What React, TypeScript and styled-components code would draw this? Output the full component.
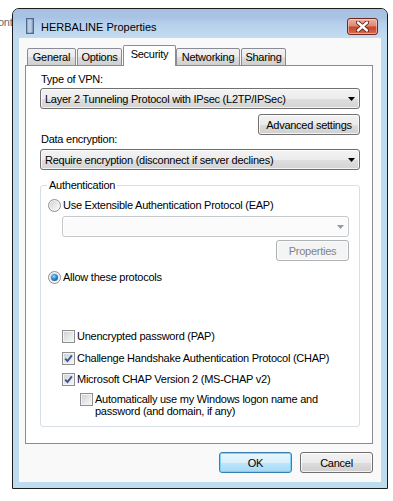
import styled, { createGlobalStyle } from 'styled-components';

const GlobalStyle = createGlobalStyle`
  html, body {
    margin: 0;
    padding: 0;
    background: #fff;
  }
  body {
    font-family: "Liberation Sans", Arial, sans-serif;
    font-size: 11px;
    letter-spacing: -0.25px;
    color: #000;
  }
`;

const Page = styled.div`
  display: flex;
  align-items: flex-start;
  width: 393px;
  height: 501px;
  overflow: hidden;
  background: #fff;
`;

// text of the window lying behind the dialog
const Behind = styled.div`
  width: 12px;
  flex: 0 0 12px;
  overflow: hidden;
  padding-top: 15px;
  line-height: 14px;
  color: #6a6a6a;
  white-space: nowrap;
  span {
    margin-left: -2px;
  }
`;

const Window = styled.div`
  box-sizing: border-box;
  width: 376px;
  height: 481px;
  margin-top: 8px;
  border: 1px solid #1c1c1c;
  border-radius: 7px 7px 0 0;
  background: #bddcee;
  display: flex;
  flex-direction: column;
  overflow: hidden;
`;

const TitleBar = styled.div`
  height: 29px;
  flex: 0 0 29px;
  display: flex;
  align-items: flex-start;
  padding-left: 13px;
  padding-right: 9px;
  background: linear-gradient(180deg, #a6bfe2 0%, #a9c3e5 30%, #b6cfeb 50%, #bed7ef 75%, #c3dcf0 100%);
`;

const TitleIcon = styled.svg`
  margin-top: 9px;
  flex: 0 0 auto;
`;

const TitleText = styled.div`
  margin-left: 7px;
  margin-top: 11px;
  line-height: 14px;
  letter-spacing: 0;
  flex: 1;
`;

const CloseButton = styled.div`
  box-sizing: border-box;
  width: 31px;
  height: 17px;
  margin-top: 9px;
  border: 1px solid #6e2a22;
  border-radius: 3px;
  background: linear-gradient(180deg, #eab2a4 0%, #dc8a74 45%, #c9452c 55%, #d66a4f 100%);
  box-shadow: inset 0 0 0 1px rgba(255, 220, 210, 0.55);
  display: flex;
  align-items: center;
  justify-content: center;
`;

const Client = styled.div`
  flex: 1;
  margin: 0 6px 6px 6px;
  background: #f9f9f9;
  display: flex;
  flex-direction: column;
  padding-top: 7px;
`;

const TabStrip = styled.div`
  display: flex;
  align-items: flex-end;
  gap: 1px;
  height: 21px;
  padding-left: 8px;
  margin-bottom: -1px;
  position: relative;
  z-index: 1;
`;

const Tab = styled.div<{ $width: number; $active?: boolean }>`
  box-sizing: border-box;
  width: ${p => p.$width}px;
  height: ${p => (p.$active ? 21 : 18)}px;
  margin-right: ${p => (p.$active ? -1 : 0)}px;
  border: 1px solid #898c95;
  border-bottom: ${p => (p.$active ? 'none' : '1px solid #898c95')};
  border-radius: 2px 2px 0 0;
  background: ${p =>
    p.$active ? '#fff' : 'linear-gradient(180deg, #f2f2f2 0%, #ebebeb 50%, #dddddd 51%, #cfcfcf 100%)'};
  text-align: center;
  line-height: ${p => (p.$active ? 16 : 17)}px;
`;

const Panel = styled.div`
  box-sizing: border-box;
  width: 348px;
  height: 379px;
  margin-left: 6px;
  border: 1px solid #898c95;
  background: #fff;
  padding: 6px 12px 0 14px;
  display: flex;
  flex-direction: column;
`;

const FieldLabel = styled.div<{ $top?: number }>`
  line-height: 14px;
  padding-left: 1px;
  margin-top: ${p => p.$top ?? 0}px;
`;

const SelectBox = styled.div<{ $width: number; $top: number; $disabled?: boolean }>`
  box-sizing: border-box;
  width: ${p => p.$width}px;
  height: 21px;
  margin-top: ${p => p.$top}px;
  display: flex;
  align-items: center;
  justify-content: space-between;
  padding: 0 4px 0 4px;
  border: 1px solid ${p => (p.$disabled ? '#c3c8cc' : '#707070')};
  border-radius: 3px;
  background: ${p =>
    p.$disabled ? '#fbfbfb' : 'linear-gradient(180deg, #f3f3f3 0%, #ececec 50%, #dfdfdf 51%, #d3d3d3 100%)'};
  box-shadow: inset 0 0 0 1px ${p => (p.$disabled ? '#ffffff' : 'rgba(255,255,255,0.75)')};
  white-space: nowrap;
`;

const ButtonRow = styled.div<{ $top: number; $right?: number }>`
  display: flex;
  justify-content: flex-end;
  gap: 8px;
  margin-top: ${p => p.$top}px;
  padding-right: ${p => p.$right ?? 0}px;
`;

const Button = styled.div<{ $width: number; $isDefault?: boolean; $disabled?: boolean }>`
  box-sizing: border-box;
  width: ${p => p.$width}px;
  height: 21px;
  border: 1px solid ${p => (p.$isDefault ? '#3c7fb1' : p.$disabled ? '#adb2b5' : '#707070')};
  border-radius: 3px;
  background: ${p =>
    p.$disabled
      ? '#f4f4f4'
      : p.$isDefault
      ? 'linear-gradient(180deg, #eaf6fd 0%, #d9f0fc 50%, #bee6fd 51%, #a7d9f5 100%)'
      : 'linear-gradient(180deg, #f2f2f2 0%, #ebebeb 50%, #dddddd 51%, #cfcfcf 100%)'};
  box-shadow: inset 0 0 0 1px ${p => (p.$isDefault ? '#7ed2f7' : 'rgba(255,255,255,0.75)')};
  color: ${p => (p.$disabled ? '#838383' : '#000')};
  display: flex;
  align-items: center;
  justify-content: center;
`;

const GroupBox = styled.fieldset`
  box-sizing: border-box;
  width: 320px;
  margin: 8px 0 0 0;
  padding: 0 10px 9px 7px;
  border: 1px solid #d5dfe5;
  border-radius: 3px;
  display: flex;
  flex-direction: column;
`;

const Legend = styled.legend`
  margin-left: -1px;
  padding: 0 2px;
  line-height: 14px;
`;

const OptionRow = styled.div<{ $top: number; $indent?: number; $align?: string }>`
  display: flex;
  align-items: ${p => p.$align ?? 'center'};
  gap: 2px;
  margin-top: ${p => p.$top}px;
  padding-left: ${p => p.$indent ?? 0}px;
  line-height: 14px;
`;

const Radio = styled.span<{ $checked?: boolean }>`
  box-sizing: border-box;
  width: 13px;
  height: 13px;
  flex: 0 0 13px;
  border-radius: 50%;
  border: 1px solid #8e8f8f;
  background: linear-gradient(135deg, #c9ccd1 0%, #e6e7e9 50%, #fbfbfb 100%);
  box-shadow: inset 0 0 0 1px #f5f5f5;
  display: flex;
  align-items: center;
  justify-content: center;
  &::after {
    content: '';
    display: ${p => (p.$checked ? 'block' : 'none')};
    width: 7px;
    height: 7px;
    border-radius: 50%;
    background: radial-gradient(circle at 40% 35%, #9be0fb 0%, #2f8fd3 40%, #0c3f79 100%);
  }
`;

const CheckBox = styled.span`
  box-sizing: border-box;
  width: 13px;
  height: 13px;
  flex: 0 0 13px;
  border: 1px solid #8e8f8f;
  background: linear-gradient(135deg, #cbced3 0%, #e4e5e7 50%, #f8f8f8 100%);
  box-shadow: inset 0 0 0 1px #f4f4f4;
  display: flex;
  align-items: center;
  justify-content: center;
`;

const OptionText = styled.span<{ $lineHeight?: number }>`
  line-height: ${p => p.$lineHeight ?? 14}px;
`;

const Arrow = ({ color }: { color: string }) => (
  <svg width="7" height="4" viewBox="0 0 7 4">
    <polygon points="0,0 7,0 3.5,4" fill={color} />
  </svg>
);

const Check = () => (
  <svg width="9" height="9" viewBox="0 0 9 9">
    <path d="M1.2 4.6 L3.5 7 L7.9 1.3" fill="none" stroke="#3b5595" strokeWidth="1.9" />
  </svg>
);

const Checkbox = ({ checked }: { checked?: boolean }) => <CheckBox>{checked && <Check />}</CheckBox>;

const ServerIcon = () => (
  <TitleIcon width="8" height="16" viewBox="0 0 8 16">
    <defs>
      <linearGradient id="srv" x1="0" x2="1">
        <stop offset="0" stopColor="#7d97bb" />
        <stop offset="0.5" stopColor="#a9bfdc" />
        <stop offset="1" stopColor="#58779f" />
      </linearGradient>
    </defs>
    <rect x="0.5" y="0.5" width="7" height="15" fill="url(#srv)" stroke="#4f6a91" />
    {[3, 5, 7, 9, 11, 13].map(y => (
      <line key={y} x1="1.5" x2="6.5" y1={y} y2={y} stroke="#e3ecf7" strokeWidth="0.8" />
    ))}
  </TitleIcon>
);

const CloseGlyph = () => (
  <svg width="13" height="11" viewBox="0 0 13 11">
    <path d="M2 1.5 L11 9.5 M11 1.5 L2 9.5" stroke="#5a1e16" strokeWidth="4.2" strokeLinecap="round" />
    <path d="M2 1.5 L11 9.5 M11 1.5 L2 9.5" stroke="#fff" strokeWidth="2.4" strokeLinecap="round" />
  </svg>
);

const tabs = [
  { label: 'General', width: 49 },
  { label: 'Options', width: 45 },
  { label: 'Security', width: 53, active: true },
  { label: 'Networking', width: 64 },
  { label: 'Sharing', width: 45 },
];

const protocols = [
  { label: 'Unencrypted password (PAP)', checked: false, top: 45 },
  { label: 'Challenge Handshake Authentication Protocol (CHAP)', checked: true, top: 8 },
  { label: 'Microsoft CHAP Version 2 (MS-CHAP v2)', checked: true, top: 7 },
];

const App = () => {
  return (
    <>
      <GlobalStyle />
      <Page>
        <Behind>
          <span>ont</span>
        </Behind>
        <Window>
          <TitleBar>
            <ServerIcon />
            <TitleText>HERBALINE Properties</TitleText>
            <CloseButton>
              <CloseGlyph />
            </CloseButton>
          </TitleBar>
          <Client>
            <TabStrip>
              {tabs.map(t => (
                <Tab key={t.label} $width={t.width} $active={t.active}>
                  {t.label}
                </Tab>
              ))}
            </TabStrip>
            <Panel>
              <FieldLabel>Type of VPN:</FieldLabel>
              <SelectBox $width={320} $top={2}>
                <span>Layer 2 Tunneling Protocol with IPsec (L2TP/IPSec)</span>
                <Arrow color="#000" />
              </SelectBox>
              <ButtonRow $top={5}>
                <Button $width={102}>Advanced settings</Button>
              </ButtonRow>
              <FieldLabel $top={-3}>Data encryption:</FieldLabel>
              <SelectBox $width={320} $top={3}>
                <span>Require encryption (disconnect if server declines)</span>
                <Arrow color="#000" />
              </SelectBox>
              <GroupBox>
                <Legend>Authentication</Legend>
                <OptionRow $top={6}>
                  <Radio />
                  <OptionText>Use Extensible Authentication Protocol (EAP)</OptionText>
                </OptionRow>
                <OptionRow $top={4} $indent={14}>
                  <SelectBox $width={287} $top={0} $disabled>
                    <span />
                    <Arrow color="#9a9a9a" />
                  </SelectBox>
                </OptionRow>
                <ButtonRow $top={3}>
                  <Button $width={73} $disabled>
                    Properties
                  </Button>
                </ButtonRow>
                <OptionRow $top={9}>
                  <Radio $checked />
                  <OptionText>Allow these protocols</OptionText>
                </OptionRow>
                {protocols.map(p => (
                  <OptionRow key={p.label} $top={p.top} $indent={14}>
                    <Checkbox checked={p.checked} />
                    <OptionText>{p.label}</OptionText>
                  </OptionRow>
                ))}
                <OptionRow $top={7} $indent={32} $align="flex-start">
                  <Checkbox />
                  <OptionText $lineHeight={12}>
                    Automatically use my Windows logon name and
                    <br />
                    password (and domain, if any)
                  </OptionText>
                </OptionRow>
              </GroupBox>
            </Panel>
            <ButtonRow $top={8} $right={8}>
              <Button $width={73} $isDefault>
                OK
              </Button>
              <Button $width={73}>Cancel</Button>
            </ButtonRow>
          </Client>
        </Window>
      </Page>
    </>
  );
};

export default App;
